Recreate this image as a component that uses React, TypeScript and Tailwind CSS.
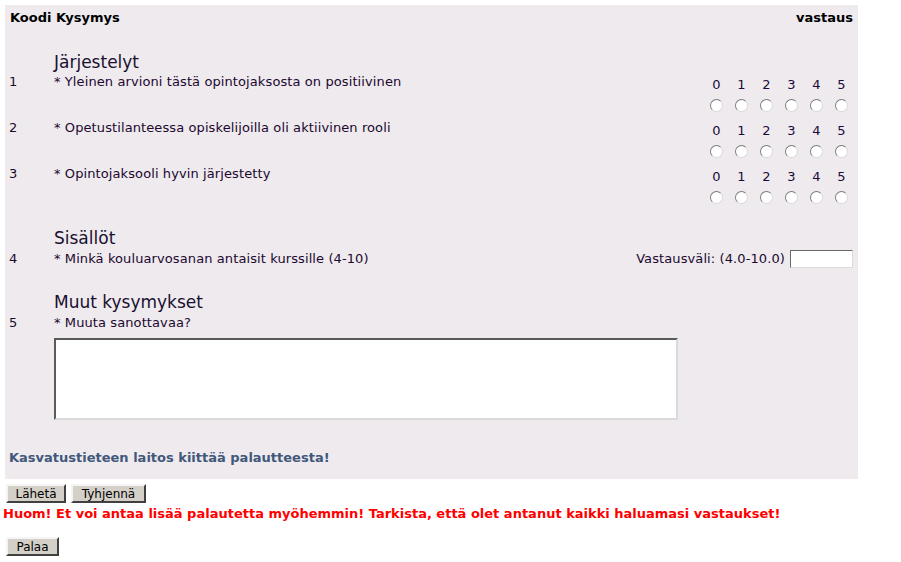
import type { ReactNode } from "react";

const FONT = "font-['Verdana','DejaVu_Sans',sans-serif]";

function Radio() {
  return (
    <span className="block h-[13px] w-[13px] rounded-full border border-t-[#7c7c7c] border-l-[#7c7c7c] border-r-[#d8d8d8] border-b-[#d8d8d8] bg-white" />
  );
}

function Scale() {
  const vals = [0, 1, 2, 3, 4, 5];
  return (
    <div className="mr-[4px] flex flex-col pt-[3px]">
      <div className="flex">
        {vals.map((v) => (
          <span key={v} className="w-[25px] text-center text-[13px] leading-[16px] text-[#1a0a3a]">
            {v}
          </span>
        ))}
      </div>
      <div className="mt-[6px] flex">
        {vals.map((v) => (
          <span key={v} className="flex w-[25px] justify-center">
            <Radio />
          </span>
        ))}
      </div>
    </div>
  );
}

function Section({ title }: { title: string }) {
  return (
    <div className="pl-[49px] text-[17px] leading-[20px] text-[#1a1030]">{title}</div>
  );
}

function Question({
  code,
  text,
  answer,
  className = "",
}: {
  code: string;
  text: string;
  answer?: ReactNode;
  className?: string;
}) {
  return (
    <div className={`flex items-start ${className}`}>
      <span className="w-[49px] pl-[4px] text-[13px] leading-[16px] text-[#1a0a2a]">{code}</span>
      <span className="flex-1 text-[13px] tracking-[0.1px] leading-[16px] text-[#22082e]">{text}</span>
      {answer}
    </div>
  );
}

function Button({ label, w }: { label: string; w: string }) {
  return (
    <button
      className={`block h-[19px] ${w} border-2 border-t-[#f4f4f4] border-l-[#f4f4f4] border-r-[#404040] border-b-[#404040] bg-[#d4d0c8] text-[12px] leading-[14px] text-black`}
    >
      {label}
    </button>
  );
}

export default function App() {
  return (
    <div className={`min-h-[562px] bg-white pt-[5px] ${FONT}`}>
      <div className="ml-[5px] w-[853px] bg-[#eeeaee] pb-[13px]">
        <div className="flex items-center justify-between px-[5px] pt-[6px] text-[13px] font-bold leading-[14px] text-black">
          <span>Koodi Kysymys</span>
          <span>vastaus</span>
        </div>

        <div className="mt-[27px]">
          <Section title="Järjestelyt" />
          <Question
            code="1"
            text="* Yleinen arvioni tästä opintojaksosta on positiivinen"
            answer={<Scale />}
            className="mt-[2px] h-[46px]"
          />
          <Question
            code="2"
            text="* Opetustilanteessa opiskelijoilla oli aktiivinen rooli"
            answer={<Scale />}
            className="h-[46px]"
          />
          <Question
            code="3"
            text="* Opintojaksooli hyvin järjestetty"
            answer={<Scale />}
            className="h-[46px]"
          />
        </div>

        <div className="mt-[16px]">
          <Section title="Sisällöt" />
          <Question
            code="4"
            text="* Minkä kouluarvosanan antaisit kurssille (4-10)"
            className="mt-[3px]"
            answer={
              <div className="mr-[5px] -mt-[1px] flex items-center gap-[5px]">
                <span className="text-[13px] tracking-[0.1px] leading-[16px] text-[#22082e]">
                  Vastausväli: (4.0-10.0)
                </span>
                <input className="h-[18px] w-[63px] border border-t-[#6a6a6a] border-l-[#6a6a6a] border-r-[#dcdcdc] border-b-[#dcdcdc] bg-white outline-none" />
              </div>
            }
          />
        </div>

        <div className="mt-[24px]">
          <Section title="Muut kysymykset" />
          <Question code="5" text="* Muuta sanottavaa?" className="mt-[3px]" />
          <div className="mt-[7px] pl-[49px]">
            <textarea className="block h-[82px] w-[624px] resize-none border-2 border-t-[#5a5a5a] border-l-[#5a5a5a] border-r-[#dadada] border-b-[#dadada] bg-white outline-none" />
          </div>
        </div>

        <div className="mt-[30px] pl-[4px] text-[13px] font-bold leading-[16px] text-[#42587a]">
          Kasvatustieteen laitos kiittää palautteesta!
        </div>
      </div>

      <div className="ml-[6px] mt-[5px] flex gap-[5px]">
        <Button label="Lähetä" w="w-[60px]" />
        <Button label="Tyhjennä" w="w-[75px]" />
      </div>
      <div className="ml-[3px] mt-[3px] text-[13px] font-bold leading-[16px] text-[#ff0000]">
        Huom! Et voi antaa lisää palautetta myöhemmin! Tarkista, että olet antanut kaikki haluamasi vastaukset!
      </div>
      <div className="ml-[6px] mt-[15px]">
        <Button label="Palaa" w="w-[53px]" />
      </div>
    </div>
  );
}
